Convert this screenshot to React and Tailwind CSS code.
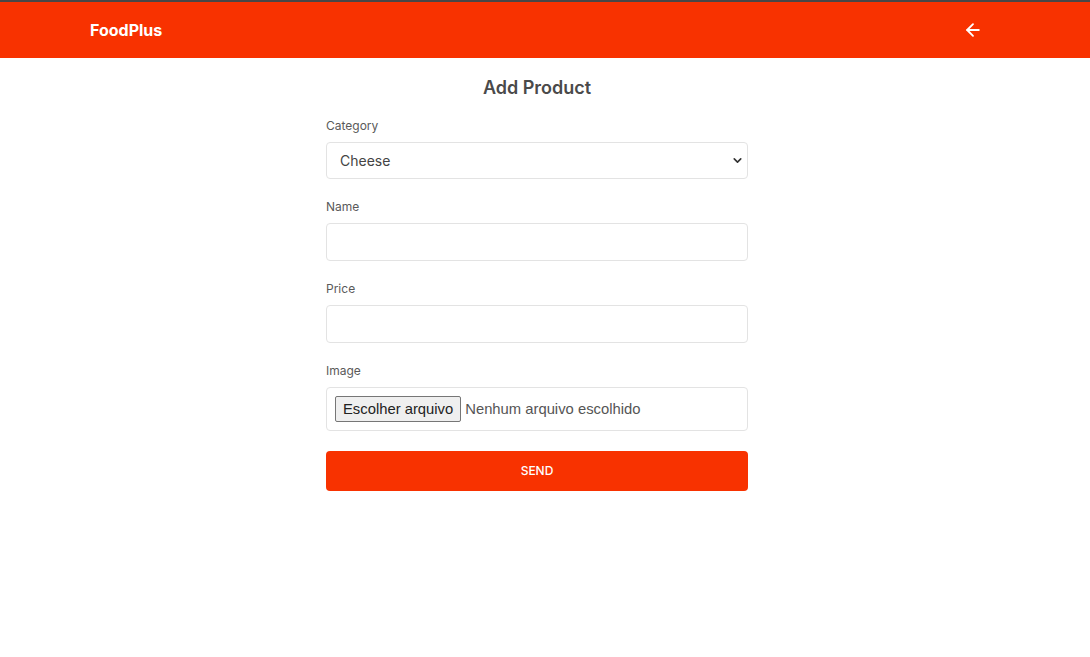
import { ArrowLeft, ChevronDown } from 'lucide-react';

export default function App() {
  return (
    <div className="min-h-screen bg-white font-['Inter',sans-serif]">
      <header className="h-[58px] bg-[#f83200] border-t-2 border-[#474747] flex items-center justify-between pl-[90px] pr-[107px]">
        <span className="text-white font-bold text-base">FoodPlus</span>
        <ArrowLeft className="w-5 h-5 text-white" strokeWidth={2.2} />
      </header>

      <div className="w-[438px] mx-auto pr-4">
        <h1 className="mt-4 text-center text-lg font-semibold text-[#4a4a4a] leading-7">Add Product</h1>

        <form className="mt-4" onSubmit={e => e.preventDefault()}>
          <label className="block text-xs text-[#5a5a5a] leading-4 mb-2">Category</label>
          <div className="relative">
            <select className="appearance-none w-full h-[37px] border border-[#e3e3e3] rounded pl-[13px] text-sm text-[#444] bg-white outline-none">
              <option>Cheese</option>
            </select>
            <ChevronDown className="absolute right-[4px] top-[12px] w-[13px] h-[13px] text-[#333] pointer-events-none" strokeWidth={3} />
          </div>

          <label className="block text-xs text-[#5a5a5a] leading-4 mt-5 mb-2">Name</label>
          <input type="text" className="w-full h-[38px] border border-[#e3e3e3] rounded px-3 text-sm outline-none" />

          <label className="block text-xs text-[#5a5a5a] leading-4 mt-5 mb-2">Price</label>
          <input type="text" className="w-full h-[38px] border border-[#e3e3e3] rounded px-3 text-sm outline-none" />

          <label className="block text-xs text-[#5a5a5a] leading-4 mt-5 mb-2">Image</label>
          <div className="h-[44px] border border-[#e3e3e3] rounded flex items-center pl-2 gap-1 font-['Liberation_Sans',sans-serif]">
            <span className="h-[26px] px-[7px] flex items-center bg-[#efefef] border border-[#767676] rounded-[2px] text-[#222] text-[14.8px]">Escolher arquivo</span>
            <span className="text-[#555] text-[14.8px]">Nenhum arquivo escolhido</span>
          </div>

          <button type="submit" className="mt-5 w-full h-10 bg-[#f83200] rounded text-white text-xs font-medium">SEND</button>
        </form>
      </div>
    </div>
  );
}
